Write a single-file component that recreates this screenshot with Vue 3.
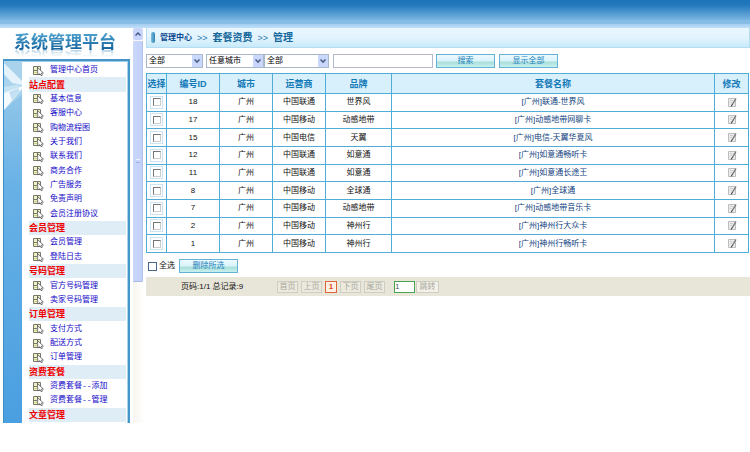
<script setup>
import { ref, computed } from 'vue'

const groups = [
  { title: '', items: ['管理中心首页'] },
  { title: '站点配置', items: ['基本信息', '客服中心', '购物流程图', '关于我们', '联系我们', '商务合作', '广告服务', '免责声明', '会员注册协议'] },
  { title: '会员管理', items: ['会员管理', '登陆日志'] },
  { title: '号码管理', items: ['官方号码管理', '卖家号码管理'] },
  { title: '订单管理', items: ['支付方式', '配送方式', '订单管理'] },
  { title: '资费套餐', items: ['资费套餐--添加', '资费套餐--管理'] },
  { title: '文章管理', items: [] },
]

const rows = [
  { id: 18, city: '广州', carrier: '中国联通', brand: '世界风', name: '[广州]联通-世界风' },
  { id: 17, city: '广州', carrier: '中国移动', brand: '动感地带', name: '[广州]动感地带网聊卡' },
  { id: 15, city: '广州', carrier: '中国电信', brand: '天翼', name: '[广州]电信-天翼华夏风' },
  { id: 12, city: '广州', carrier: '中国联通', brand: '如意通', name: '[广州]如意通畅听卡' },
  { id: 11, city: '广州', carrier: '中国联通', brand: '如意通', name: '[广州]如意通长途王' },
  { id: 8, city: '广州', carrier: '中国移动', brand: '全球通', name: '[广州]全球通' },
  { id: 7, city: '广州', carrier: '中国移动', brand: '动感地带', name: '[广州]动感地带音乐卡' },
  { id: 2, city: '广州', carrier: '中国移动', brand: '神州行', name: '[广州]神州行大众卡' },
  { id: 1, city: '广州', carrier: '中国移动', brand: '神州行', name: '[广州]神州行畅听卡' },
]

const selected = ref([])
const keyword = ref('')
const page = ref('1')
const allSelected = computed({
  get: () => selected.value.length === rows.length,
  set: (on) => { selected.value = on ? rows.map((r) => r.id) : [] },
})
</script>

<template>
  <div class="page">
    <header class="banner"></header>
    <div class="body">
      <aside class="sidebar">
        <h1 class="logo">系统管理平台</h1>
        <div class="frame">
          <div class="strip">
            <svg viewBox="0 0 18 52" class="strip-art" aria-hidden="true">
              <path d="M0 0H18V33L0 49Z" fill="#a9d3ed" />
              <path d="M0 2L18 20V24L8 22L0 13Z" fill="#e4f3fb" />
              <path d="M0 26L17 23L0 40Z" fill="#c6e3f4" />
              <path d="M0 32L18 25V28L0 49Z" fill="#f4fafd" />
              <path d="M5 31L14 27L16 30L8 39Z" fill="#c2e0f2" />
            </svg>
          </div>
          <nav class="menu">
            <template v-for="g in groups" :key="g.title">
              <h2 v-if="g.title" class="group">{{ g.title }}</h2>
              <a v-for="item in g.items" :key="item" href="#" class="item">
                <svg class="icon" viewBox="0 0 11 11" aria-hidden="true">
                  <path d="M.5 1.5H7.5V9.5H.5Z" fill="#f1f1c6" stroke="#77776a" />
                  <path d="M1 5.5H4M4.5 2V5" stroke="#77776a" fill="none" />
                  <path d="M1.5 7.5H4" stroke="#c3cb74" />
                  <path d="M4.5 2.5L10.4 8L8.4 8.2L9.4 10.2L8 10.6L7 8.7L4.8 10Z" fill="#fff" stroke="#555" stroke-width=".8" />
                </svg>
                <span>{{ item }}</span>
              </a>
            </template>
          </nav>
        </div>
      </aside>

      <div class="scroll" aria-hidden="true">
        <div class="scroll-up">
          <svg viewBox="0 0 10 12"><path d="M2.5 7.5L5 5L7.5 7.5" fill="none" stroke="#3f5686" stroke-width="1.4" /></svg>
        </div>
        <div class="scroll-thumb"><i></i></div>
      </div>

      <main class="main">
        <div class="crumbs">
          <i class="pill"></i>
          <a href="#" class="home">管理中心</a>
          <span class="sep">&gt;&gt;</span>
          <b>套餐资费</b>
          <span class="sep">&gt;&gt;</span>
          <b>管理</b>
        </div>

        <form class="filters" @submit.prevent>
          <span class="pick pick-type">
            <select aria-label="类型"><option>全部</option></select>
            <svg viewBox="0 0 10 12"><rect width="10" height="12" rx="1" fill="#c8d7fb" /><path d="M2.5 4.5L5 7L7.5 4.5" fill="none" stroke="#4d6185" stroke-width="1.6" /></svg>
          </span>
          <span class="pick pick-city">
            <select aria-label="城市"><option>任意城市</option></select>
            <svg viewBox="0 0 10 12"><rect width="10" height="12" rx="1" fill="#c8d7fb" /><path d="M2.5 4.5L5 7L7.5 4.5" fill="none" stroke="#4d6185" stroke-width="1.6" /></svg>
          </span>
          <span class="pick pick-brand">
            <select aria-label="品牌"><option>全部</option></select>
            <svg viewBox="0 0 10 12"><rect width="10" height="12" rx="1" fill="#c8d7fb" /><path d="M2.5 4.5L5 7L7.5 4.5" fill="none" stroke="#4d6185" stroke-width="1.6" /></svg>
          </span>
          <input v-model="keyword" class="keyword" type="text" aria-label="关键字" />
          <button class="btn" type="submit">搜索</button>
          <button class="btn" type="button">显示全部</button>
        </form>

        <table class="list">
          <colgroup>
            <col class="c-check" /><col class="c-mid" /><col class="c-mid" /><col class="c-mid" />
            <col class="c-brand" /><col /><col class="c-edit" />
          </colgroup>
          <thead>
            <tr>
              <th>选择</th><th>编号ID</th><th>城市</th><th>运营商</th><th>品牌</th><th>套餐名称</th><th>修改</th>
            </tr>
          </thead>
          <tbody>
            <tr v-for="r in rows" :key="r.id">
              <td><label class="tick"><input v-model="selected" type="checkbox" :value="r.id" :aria-label="r.name" /></label></td>
              <td>{{ r.id }}</td>
              <td>{{ r.city }}</td>
              <td>{{ r.carrier }}</td>
              <td>{{ r.brand }}</td>
              <td><a href="#" class="name">{{ r.name }}</a></td>
              <td>
                <a href="#" class="edit" aria-label="修改">
                  <svg viewBox="0 0 10 11">
                    <path d="M1.5 1.5H8.5V9.5H1.5Z" fill="#ececec" stroke="#bdbdbd" />
                    <path d="M3 3.5H6M3 5.5H5" stroke="#cfcfcf" />
                    <path d="M9 1.5L5 8" stroke="#777" stroke-width="1.4" />
                    <path d="M5.2 7.5L4.2 9.5" stroke="#333" />
                  </svg>
                </a>
              </td>
            </tr>
          </tbody>
        </table>

        <div class="bulk">
          <label class="all"><input v-model="allSelected" type="checkbox" />全选</label>
          <button class="btn" type="button">删除所选</button>
        </div>

        <div class="pager">
          <span class="total">页码:1/1 总记录:9</span>
          <button class="pg" type="button" disabled>首页</button>
          <button class="pg" type="button" disabled>上页</button>
          <button class="pg current" type="button">1</button>
          <button class="pg" type="button" disabled>下页</button>
          <button class="pg" type="button" disabled>尾页</button>
          <input v-model="page" class="goto" type="text" aria-label="页码" />
          <button class="pg jump" type="button">跳转</button>
        </div>
      </main>
    </div>
  </div>
</template>

<style>
body {
  margin: 0;
  background: #fff;
}
</style>

<style scoped>
* {
  box-sizing: border-box;
}
.page {
  display: flex;
  flex-direction: column;
  min-height: 100vh;
  padding-bottom: 29px;
  font-family: "Liberation Sans", "Noto Sans CJK SC", sans-serif;
  font-size: 8px;
  line-height: 12px;
  color: #111;
}
a {
  text-decoration: none;
}
button, input, select {
  font: inherit;
  margin: 0;
  padding: 0;
}
.banner {
  height: 28px;
  background: linear-gradient(#1c74b9 0, #2379bd 5px, #67a8d9 17px, #8cc1ea 22px, #72b1e0 23px, #a4cdf0 24px, #bfe0f8 28px);
}
.body {
  flex: 1;
  display: flex;
}
.sidebar {
  width: 133px;
  display: flex;
  flex-direction: column;
  padding-left: 3px;
}
.logo {
  margin: 0;
  height: 31px;
  padding: 0 0 0 11px;
  font-family: "Noto Sans CJK SC", sans-serif;
  font-size: 17px;
  line-height: 25px;
  font-weight: 700;
  white-space: nowrap;
  background: linear-gradient(#4a9fcc 6px, #17659f 21px);
  background-clip: text;
  color: transparent;
  -webkit-box-reflect: below -19px linear-gradient(transparent 45%, rgba(0, 0, 0, .35) 72%);
}
.frame {
  flex: 1;
  display: flex;
  width: 127px;
  border-top: 2px solid #4595c9;
  border-left: 1px solid #3c8fc8;
  border-right: 2px solid #4595c9;
}
.strip {
  width: 18px;
  background: linear-gradient(#9fcdea, #68b1e6 35%, #4a9fe0);
}
.strip-art {
  display: block;
  width: 100%;
}
.menu {
  flex: 1;
  display: grid;
  grid-auto-rows: 1fr;
  padding: 1px 1px 1px 7px;
  border-top: 1px solid #9ccbe9;
  border-right: 1px solid #a9d3ee;
}
.group {
  margin: 0;
  display: flex;
  align-items: center;
  font-size: 9px;
  line-height: 14px;
  font-weight: 700;
  color: #f00000;
  background: #deedf6;
}
.item {
  display: flex;
  align-items: center;
  gap: 6px;
  padding-left: 4px;
  font-family: "Liberation Mono", "Noto Sans CJK SC", monospace;
  line-height: 14px;
  color: #1408c8;
  white-space: nowrap;
}
.icon {
  width: 11px;
  height: 11px;
}
.scroll {
  width: 10px;
  background: linear-gradient(90deg, #f7f5f0, #fefefc);
}
.scroll-up {
  height: 12px;
  background: #c9d5fa;
  border-radius: 2px;
}
.scroll-up svg {
  display: block;
  width: 10px;
  height: 12px;
}
.scroll-thumb {
  height: 61%;
  margin-top: 1px;
  display: flex;
  align-items: center;
  justify-content: center;
  background: linear-gradient(90deg, #cbd8fc, #c3d0f8);
  border-right: 1px solid #b2c2ee;
  border-bottom: 1px solid #a9b9e4;
  border-radius: 1px;
}
.scroll-thumb i {
  width: 4px;
  height: 4px;
  border-top: 1px solid #eef3ff;
  border-bottom: 1px solid #9cb0e6;
}
.main {
  flex: 1;
  min-width: 0;
  padding-left: 3px;
}
.crumbs {
  display: flex;
  align-items: center;
  gap: 5px;
  height: 20px;
  padding-left: 4px;
  border: 1px solid #b5dcf0;
  border-top: 0;
  background: linear-gradient(#e9f6fe, #e3f4fe 50%, #c8eafa);
  font-size: 10px;
  color: #14689c;
}
.pill {
  width: 4px;
  height: 11px;
  border-radius: 2px;
  background: linear-gradient(90deg, #7ec0e0, #2a82b4);
}
.home {
  font-size: 8px;
  font-weight: 700;
  color: #0b4a90;
}
.sep {
  font-size: 9px;
  color: #2c7cab;
}
.filters {
  display: flex;
  align-items: center;
  height: 25px;
}
.pick {
  position: relative;
  height: 14px;
}
.pick select {
  appearance: none;
  display: block;
  width: 100%;
  height: 14px;
  padding-left: 2px;
  border: 1px solid #a9b8c8;
  border-radius: 0;
  background: #fff;
  color: #000;
}
.pick svg {
  position: absolute;
  top: 1px;
  right: 1px;
  width: 10px;
  height: 12px;
  pointer-events: none;
}
.pick-type {
  width: 57px;
  margin-right: 3px;
}
.pick-city {
  width: 58px;
}
.pick-brand {
  width: 65px;
  margin-right: 4px;
}
.keyword {
  width: 100px;
  height: 14px;
  margin-right: 3px;
  padding: 0 2px;
  border: 1px solid #b4b8c8;
  background: #fff;
}
.btn {
  width: 59px;
  height: 14px;
  border: 1px solid #64b2d6;
  background: linear-gradient(#eefaff 0, #d8f3fa 50%, #a9ded9 60%, #c8f0f0 100%);
  color: #2383bb;
  line-height: 10px;
}
.btn + .btn {
  margin-left: 4px;
}
.list {
  width: calc(100% - 1px);
  height: 180px;
  table-layout: fixed;
  border-collapse: collapse;
  text-align: center;
}
.c-check {
  width: 20px;
}
.c-mid {
  width: 53px;
}
.c-brand {
  width: 66px;
}
.c-edit {
  width: 34px;
}
th, td {
  padding: 0;
  border: 1px solid #50add8;
  white-space: nowrap;
}
th {
  height: 20px;
  font-size: 9px;
  color: #137ab8;
  background: #d8effc;
}
tbody tr {
  height: 17px;
}
.name {
  color: #123f80;
}
.tick {
  display: flex;
  align-items: center;
  justify-content: center;
  width: 13px;
  height: 13px;
  margin: 0 auto;
  border: 1px solid #cbe4f3;
}
input[type="checkbox"] {
  appearance: none;
  width: 8px;
  height: 8px;
  border: 1px solid #777;
  border-right-color: #ccc;
  border-bottom-color: #ccc;
  background: #fff;
}
input[type="checkbox"]:checked {
  background: #2383bb;
}
.edit {
  display: flex;
  justify-content: center;
}
.edit svg {
  width: 10px;
  height: 11px;
}
.bulk {
  display: flex;
  align-items: center;
  gap: 4px;
  height: 24px;
  padding: 2px 0 0 2px;
}
.all {
  display: flex;
  align-items: center;
  gap: 2px;
}
.all input[type="checkbox"] {
  width: 9px;
  height: 9px;
  border-color: #49678c;
}
.pager {
  display: flex;
  align-items: center;
  height: 19px;
  padding: 1px 0 0 35px;
  background: #e8e5d9;
}
.total {
  width: 96px;
  white-space: nowrap;
}
.pg {
  width: 21px;
  height: 12px;
  margin-right: 3px;
  border: 1px solid #d0cec3;
  background: #eceadf;
  color: #aaa89c;
  line-height: 10px;
}
.current {
  width: 12px;
  border-color: #e0653a;
  background: #fff0e6;
  color: #e04a20;
  font-weight: 700;
}
.goto {
  width: 21px;
  height: 12px;
  margin: 0 1px 0 6px;
  border: 1px solid #4aa253;
  background: #fff;
  color: #555;
}
.jump {
  width: 23px;
  background: #f3f2ea;
}
</style>
